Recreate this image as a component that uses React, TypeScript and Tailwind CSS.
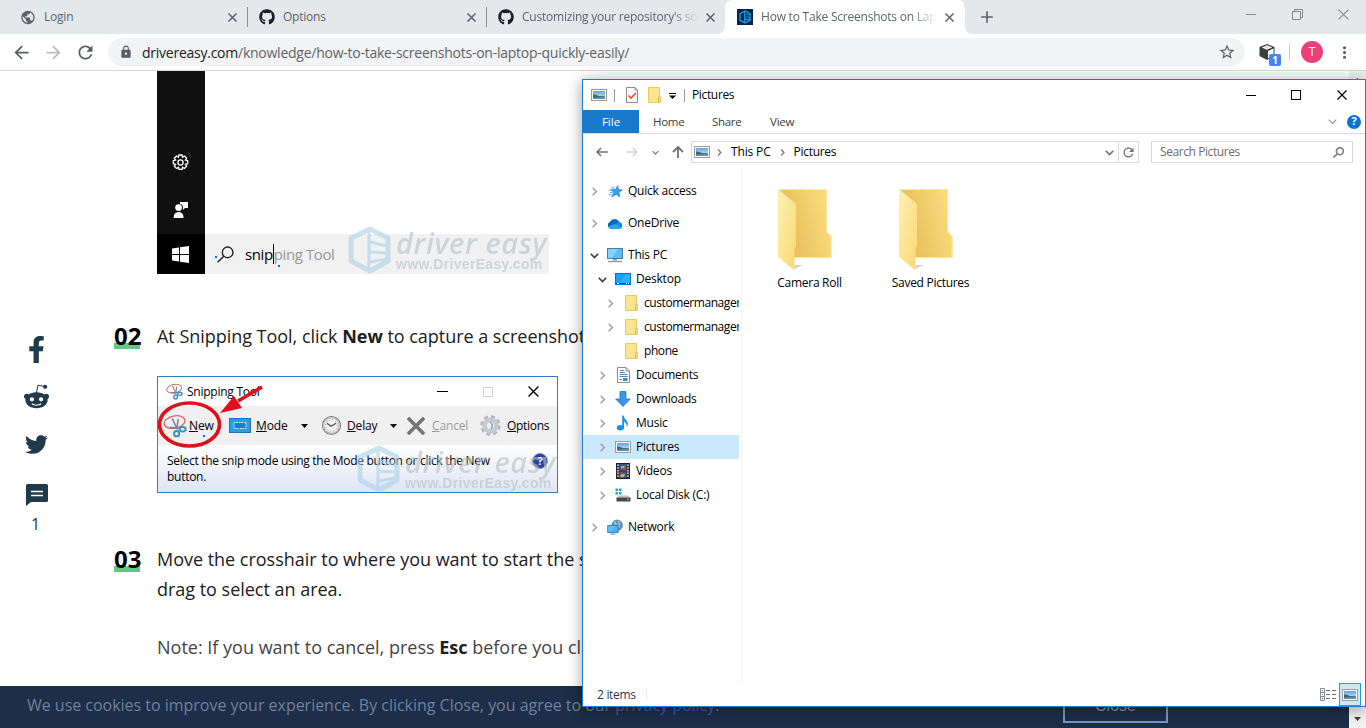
import React from "react";
import {
  MdArrowBack,
  MdArrowForward,
  MdRefresh,
  MdLock,
  MdStarBorder,
  MdMoreVert,
  MdAdd,
  MdPublic,
} from "react-icons/md";
import { FaGithub, FaFacebookF, FaRedditAlien, FaTwitter } from "react-icons/fa";

/* ---------- shared icons ---------- */

function Cross({ size = 9, stroke = 1.6, className = "" }: { size?: number; stroke?: number; className?: string }) {
  return (
    <svg width={size} height={size} viewBox="0 0 10 10" className={className} fill="none" stroke="currentColor" strokeWidth={stroke}>
      <path d="M0.5 0.5 L9.5 9.5 M9.5 0.5 L0.5 9.5" />
    </svg>
  );
}

function PictureIcon() {
  return (
    <svg width="16" height="12" viewBox="0 0 16 12" className="shrink-0">
      <defs>
        <linearGradient id="sky" x1="0" y1="0" x2="0" y2="1">
          <stop offset="0" stopColor="#5f9fe8" />
          <stop offset="1" stopColor="#e4f2fb" />
        </linearGradient>
      </defs>
      <rect x="0.5" y="0.5" width="15" height="11" fill="#fff" stroke="#9a9a9a" />
      <rect x="2" y="2" width="12" height="8" fill="url(#sky)" />
      <path d="M2 5.2 Q6 6 8 7 L14 7.2 V10 H2 Z" fill="#3d6b62" />
      <path d="M2 8.5 L14 7.8 V10 H2 Z" fill="#5a90ad" />
    </svg>
  );
}

function SmallFolder() {
  return (
    <svg width="14" height="16" viewBox="0 0 14 16" className="shrink-0">
      <path d="M0.5 0.5 H11.5 V9.5 H12.5 V15.5 H0.5 Z" fill="#ffe48f" stroke="#ecc85c" />
      <path d="M10.5 15 V10.2 Q10.5 9.5 11.5 9.5" fill="none" stroke="#dcb544" />
    </svg>
  );
}

function BigFolder() {
  return (
    <svg width="64" height="84" viewBox="0 0 64 84">
      <defs>
        <linearGradient id="folderBack" x1="0" y1="0.3" x2="1" y2="0">
          <stop offset="0.2" stopColor="#e9c35f" />
          <stop offset="1" stopColor="#ffe085" />
        </linearGradient>
        <linearGradient id="folderFront" x1="0" y1="0" x2="1" y2="1">
          <stop offset="0" stopColor="#fff0b5" />
          <stop offset="1" stopColor="#fbd871" />
        </linearGradient>
        <linearGradient id="folderShade" x1="0" y1="0" x2="1" y2="0">
          <stop offset="0" stopColor="#cfcfcf" />
          <stop offset="1" stopColor="#ffffff" />
        </linearGradient>
      </defs>
      <path d="M50 70 L63 65 L54 66 Z M17 81 L26 77 L18 77 Z" fill="url(#folderShade)" />
      <path d="M1 1 H50 V44 L54.5 48 V69.5 H14 Z" fill="url(#folderBack)" />
      <path d="M1 1.5 H50" stroke="#ffe9a6" fill="none" />
      <path d="M49.5 1 V44 L54 48.3 V69.5 H18" stroke="#ffe695" fill="none" />
      <path d="M1 1 L19 16 V58 L17.5 61 V82.5 L1 69 Z" fill="url(#folderFront)" />
    </svg>
  );
}

type Dir = "right" | "down";
function Chevron({ dir, size = 9, className = "text-[#a0a0a0]", width = 1.8 }: { dir: Dir; size?: number; className?: string; width?: number }) {
  return (
    <svg width={size} height={size} viewBox="0 0 10 10" className={className} fill="none" stroke="currentColor" strokeWidth={width}>
      {dir === "right" ? <path d="M3 0.8 L7 5 L3 9.2" /> : <path d="M0.8 3 L5 7.2 L9.2 3" />}
    </svg>
  );
}

function Magnifier({ size, className = "", width = 1.6 }: { size: number; className?: string; width?: number }) {
  return (
    <svg width={size} height={size} viewBox="0 0 16 16" className={className} fill="none" stroke="currentColor" strokeWidth={width}>
      <circle cx="10" cy="6" r="5" />
      <path d="M6.4 9.6 L0.6 15.4" />
    </svg>
  );
}

/* ---------- browser chrome ---------- */

function DriverEasyFavicon() {
  return (
    <svg width="16" height="16" viewBox="0 0 16 16" className="shrink-0">
      <rect width="16" height="16" fill="#08224c" />
      <path d="M8 2 L13 4.6 V11.2 L8 14 L3 11.2 V4.6 Z" fill="none" stroke="#1597dc" strokeWidth="1.5" />
      <path d="M7.6 2.5 V13.5 M8 5.8 H12.4 M8 8 H12.4 M8 10.4 H12.4" stroke="#1597dc" strokeWidth="1.1" />
    </svg>
  );
}

function Tab({ icon, title, active, fade }: { icon: React.ReactNode; title: string; active?: boolean; fade?: boolean }) {
  return (
    <div className={"relative flex h-[34px] w-[239px] shrink-0 items-center pl-3 text-[#5f6368] " + (active ? "bg-white" : "")}>
      {active && (
        <svg width="256" height="34" viewBox="0 0 256 34" className="absolute top-0 -left-2">
          <path d="M8 0 H16 Q8 0 8 8 Z" fill="#e4e8eb" />
          <path d="M0 34 Q8 34 8 26 V34 Z" fill="#fff" />
          <path d="M240 0 H248 V8 Q248 0 240 0 Z" fill="#e4e8eb" />
          <path d="M247 8 H248 V26 Q248 34 256 34 H247 Z" fill="#fff" />
        </svg>
      )}
      <span className="relative flex w-4 justify-center">{icon}</span>
      <span
        className={
          "relative ml-2 w-[177px] overflow-hidden whitespace-nowrap text-[12px] tracking-[-0.22px] " +
          (fade ? "[mask-image:linear-gradient(to_right,black_150px,transparent_176px)]" : "")
        }
      >
        {title}
      </span>
      <Cross size={9} stroke={1.7} className="relative ml-[7px] shrink-0" />
      {!active && !title.startsWith("Cust") && <span className="-mr-px ml-auto h-5 w-px bg-[#8a8d91]" />}
    </div>
  );
}

function BrowserChrome() {
  return (
    <header className="relative h-[71px] w-full border-b border-[#d6d8db] bg-white">
      <div className="flex h-[34px] items-center bg-[#e4e8eb] pl-2">
        <Tab icon={<MdPublic size={17} />} title="Login" />
        <Tab icon={<FaGithub size={16} className="text-[#1b1f23]" />} title="Options" />
        <Tab icon={<FaGithub size={16} className="text-[#1b1f23]" />} title="Customizing your repository's soc" fade />
        <Tab icon={<DriverEasyFavicon />} title="How to Take Screenshots on Lapt" active fade />
        <MdAdd size={20} className="ml-[13px] text-[#5f6368]" />
        <div className="mb-1.5 ml-auto flex items-center pr-[17px] text-[#85888b]">
          <span className="mr-[36px] h-px w-[10px] bg-[#85888b]" />
          <svg width="11" height="11" viewBox="0 0 11 11" className="mr-[35px]" fill="none" stroke="currentColor">
            <path d="M0.5 2.5 H8.5 V10.5 H0.5 Z M2.5 2.5 V0.5 H10.5 V8.5 H8.5" />
          </svg>
          <Cross size={11} stroke={1} />
        </div>
      </div>
      <div className="flex h-9 items-center pl-[11px] text-[#5a5e62]">
        <MdArrowBack size={21} />
        <MdArrowForward size={21} className="ml-[11px] text-[#b9bbbd]" />
        <MdRefresh size={21} className="ml-[11px]" />
        <div className="ml-3 flex h-7 w-[1137px] items-center rounded-full bg-[#f1f3f4] pl-[11px] pr-[9px]">
          <MdLock size={14} />
          <span className="ml-[9px] whitespace-nowrap text-[14px] tracking-[-0.25px] text-[#5f6368]">
            <span className="text-[#202124]">drivereasy.com</span>/knowledge/how-to-take-screenshots-on-laptop-quickly-easily/
          </span>
          <MdStarBorder size={18} className="ml-auto" />
        </div>
        <div className="relative ml-[13px] h-[22px] w-[24px]">
          <svg width="18" height="18" viewBox="0 0 18 18" className="mt-[2px]">
            <path d="M9 1 L16.5 4 V13 L9 17 L1.5 13 V4 Z" fill="#3c3f42" />
            <path d="M9 2.2 L14.2 4.4 L9 6.8 L3.8 4.4 Z" fill="#fff" />
            <path d="M9 3 L12 4.4 L9 5.7 L6 4.4 Z" fill="#d8d8d8" />
            <path d="M10 8 L15.5 5.5 V12.4 L10 15.3 Z" fill="#fff" />
          </svg>
          <span className="absolute top-[13px] left-[11px] flex h-3 w-3 items-center justify-center rounded-[2px] bg-[#4285f4] text-[10px] font-bold leading-none text-white">
            1
          </span>
        </div>
        <span className="ml-[7px] h-4 w-px bg-[#c8cacc]" />
        <span className="ml-[11px] flex h-[22px] w-[22px] items-center justify-center rounded-full bg-[#ec407a] text-[12px] text-white">T</span>
        <MdMoreVert size={19} className="ml-[12px]" />
      </div>
    </header>
  );
}

/* ---------- article ---------- */

function Watermark({ className = "" }: { className?: string }) {
  return (
    <div className={"absolute flex items-center opacity-60 " + className}>
      <svg width="44" height="48" viewBox="0 0 44 48" fill="none" stroke="#a9d3e6" strokeWidth="5">
        <path d="M22 3 L40 12 V35 L22 45 L3 35 V12 Z" strokeLinejoin="round" />
        <path d="M21 3 V45 M22 16 L39 20 M22 26 L39 27 M22 36 L38 33" strokeWidth="3.2" />
      </svg>
      <div className="ml-[4px] flex flex-col whitespace-nowrap text-[#b9bfc5]">
        <span className="text-[29px] leading-[27px] font-semibold tracking-[0.55px] italic">driver easy</span>
        <span className="mt-[1px] font-['Liberation_Sans'] text-[14px] leading-[15px] font-bold tracking-[0.32px]">www.DriverEasy.com</span>
      </div>
    </div>
  );
}

function SearchFigure() {
  return (
    <figure className="relative flex h-[203px] w-[392px]">
      <div className="flex w-12 flex-col bg-[#101010] text-white">
        <div className="flex h-[163px] flex-col items-center pt-[83px] pr-px">
          <svg width="17" height="17" viewBox="0 0 24 24" fill="none" stroke="currentColor" strokeWidth="1.9">
            <path d="M9.8 1.4 h4.4 l.7 3.1 2.7-1.7 3.1 3.1-1.7 2.7 3.1.8 v4.4 l-3.1.8 1.7 2.7-3.1 3.1-2.7-1.7-.7 3.1 H9.8 l-.7-3.1-2.7 1.7-3.1-3.1 1.7-2.7-3.1-.8 V9.4 l3.1-.8 L3.3 5.9 l3.1-3.1 2.7 1.7 Z" />
            <circle cx="12" cy="12" r="3.6" />
          </svg>
          <svg width="16" height="17" viewBox="0 0 16 17" fill="currentColor" className="mt-[30px]">
            <circle cx="5.6" cy="6.6" r="3.4" />
            <path d="M0.6 17 Q0.6 11 5.6 11 Q10.6 11 10.6 17 Z M7 1 H15 V7 H12 L10 9 V7 Q10 3 7 3 Z" />
          </svg>
        </div>
        <div className="flex h-10 items-center justify-center bg-black pr-px">
          <svg width="17" height="17" viewBox="0 0 17 17" fill="currentColor">
            <path d="M0 2.4 L7 1.4 V8 H0 Z M8 1.2 L17 0 V8 H8 Z M0 9 H7 V15.6 L0 14.6 Z M8 9 H17 V17 L8 15.8 Z" />
          </svg>
        </div>
      </div>
      <div className="mt-[163px] flex h-10 flex-1 items-center bg-[#f1f1f1] pl-3">
        <Magnifier size={17} width={1.3} className="text-[#202020]" />
        <span className="ml-[11px] flex items-center text-[15px] tracking-[-0.4px] whitespace-nowrap text-black">
          <span>snip</span>
          <span className="h-5 w-px bg-black" />
          <span className="text-[#969696]">ping Tool</span>
        </span>
      </div>
      <span className="absolute top-[185px] left-[58px] h-[2px] w-[2px] bg-blue-600" />
      <span className="absolute top-[194px] left-[121px] h-[2px] w-[2px] bg-blue-600" />
      <Watermark className="top-[155px] left-[191px]" />
    </figure>
  );
}

function SnipIcon({ size }: { size: number }) {
  return (
    <svg width={size} height={size} viewBox="0 0 22 22" fill="none" className="shrink-0">
      <ellipse cx="10.5" cy="7.5" rx="9.7" ry="5.6" stroke="#e0625e" strokeWidth="1.2" transform="rotate(-12 10 7)" />
      <path d="M8.5 4 L13 14 M14 4.5 L12.5 14" stroke="#7b8490" strokeWidth="1.4" />
      <path d="M6 12 L15 13" stroke="#7b8490" strokeWidth="1.3" />
      <circle cx="12.5" cy="18" r="2.4" stroke="#3d8fc8" strokeWidth="1.8" />
      <ellipse cx="18" cy="14" rx="2.8" ry="2" stroke="#3d8fc8" strokeWidth="1.8" />
    </svg>
  );
}

function SnippingFigure() {
  return (
    <figure className="relative flex h-[117px] w-[401px] flex-col border border-[#2b80c8] bg-white text-[12px] text-black">
      <div className="flex h-[29px] items-center pl-[8px]">
        <SnipIcon size={17} />
        <span className="ml-[4px] w-[75px] tracking-[-0.25px] whitespace-nowrap">Snipping Tool</span>
        <span className="ml-[175px] h-px w-[11px] bg-black" />
        <span className="ml-[35px] h-[10px] w-[10px] border border-[#cfcfcf]" />
        <Cross size={11} stroke={1.2} className="ml-[35px]" />
      </div>
      <div className="flex h-[39px] items-center bg-[#f0f0f0] pl-[5px] tracking-[-0.15px] whitespace-nowrap">
        <span className="flex w-[26px]"><SnipIcon size={24} /></span>
        <span className="w-[40px]"><u>N</u>ew</span>
        <span className="flex w-[27px]">
          <svg width="22" height="15" viewBox="0 0 22 15">
            <rect x="0.5" y="0.5" width="21" height="14" fill="#22a0f0" stroke="#1578c0" />
            <rect x="5" y="4.5" width="12" height="6" fill="#1580d0" stroke="#fff" strokeDasharray="1.5 1" />
          </svg>
        </span>
        <span className="w-[45px]"><u>M</u>ode</span>
        <span className="w-[20px]"><svg width="7" height="4" viewBox="0 0 7 4"><path d="M0 0 H7 L3.5 4 Z" /></svg></span>
        <span className="w-[26px]">
          <svg width="21" height="21" viewBox="0 0 21 21" fill="none">
            <circle cx="10.5" cy="10.5" r="9" fill="#f2f2f2" stroke="#7c7c7c" strokeWidth="1.1" />
            <circle cx="10.5" cy="10.5" r="7.8" stroke="#b8b8b8" strokeWidth="1.2" />
            <circle cx="10.5" cy="10.5" r="5.8" stroke="#8c8c8c" strokeDasharray="1 2.04" />
            <path d="M6 8.2 L10 11.3 L15 8.2" stroke="#505050" strokeWidth="1.1" />
          </svg>
        </span>
        <span className="w-[43px]"><u>D</u>elay</span>
        <span className="w-[17px]"><svg width="7" height="4" viewBox="0 0 7 4"><path d="M0 0 H7 L3.5 4 Z" /></svg></span>
        <span className="w-[25px] text-[#757575]"><Cross size={18} stroke={2} /></span>
        <span className="w-[48px] text-[#9b9b9b]"><u>C</u>ancel</span>
        <span className="w-[27px]">
          <svg width="21" height="21" viewBox="0 0 21 21" fill="none">
            <circle cx="10.5" cy="10.5" r="8.8" stroke="#b4babf" strokeWidth="3" strokeDasharray="4.1 2.81" />
            <circle cx="10.5" cy="10.5" r="5.8" fill="#eef1f3" stroke="#c3cad0" strokeWidth="4.5" />
            <path d="M10 7 Q14 10 11 14" stroke="#8fa3b5" strokeWidth="1.5" />
          </svg>
        </span>
        <span className="tracking-[-0.3px]"><u>O</u>ptions</span>
      </div>
      <div className="flex flex-1 justify-between bg-gradient-to-b from-white to-[#dfe4f4] pt-[8px] pr-[9px] pl-[9px]">
        <p className="w-[350px] leading-[16px] tracking-[-0.28px]">Select the snip mode using the Mode button or click the New<br />button.</p>
        <span className="flex h-4 w-4 items-center justify-center rounded-full border border-[#8790b8] bg-[#27449c] text-[11px] font-bold text-white">?</span>
      </div>
      <Watermark className="top-[68px] left-[199px]" />
      <svg width="110" height="75" viewBox="0 0 110 75" fill="none" className="absolute top-0 left-0">
        <ellipse cx="31.5" cy="47.5" rx="30" ry="21.5" stroke="#e0101a" strokeWidth="3.6" />
        <path d="M104 10 L80 24" stroke="#e0101a" strokeWidth="3.6" />
        <path d="M62 36 L76 19 L84 31 Z" fill="#e0101a" />
      </svg>
      <span className="absolute top-[58px] left-[45px] h-[2px] w-[2px] bg-blue-600" />
    </figure>
  );
}

function StepNumber({ value }: { value: string }) {
  return (
    <span className="relative w-[43px] shrink-0 text-[24px] leading-[30px] font-bold text-black">
      <span className="bg-[linear-gradient(#61c888,#61c888)] bg-[length:26px_6px] bg-[position:0_24px] bg-no-repeat">{value}</span>
    </span>
  );
}

function ShareRail() {
  return (
    <aside className="flex w-[72px] shrink-0 flex-col items-center pt-[265px] text-[#1f3a4b]">
      <FaFacebookF size={27} />
      <FaRedditAlien size={27} className="mt-[20px]" />
      <FaTwitter size={23} className="mt-[23px]" />
      <svg width="22" height="22" viewBox="0 0 22 22" className="mt-[28px] ml-[2px]">
        <path d="M1.5 0 H20.5 Q22 0 22 1.5 V16.5 Q22 18 20.5 18 H5 L0 22 V1.5 Q0 0 1.5 0 Z" fill="currentColor" />
        <path d="M5 7.5 H17 M5 11.5 H17" stroke="#fff" strokeWidth="1.3" />
      </svg>
      <span className="mt-[7px] mr-px text-[16px] leading-[22px]">1</span>
    </aside>
  );
}

function Article() {
  return (
    <main className="flex h-[615px] overflow-hidden bg-white">
      <ShareRail />
      <article className="w-[700px] pl-[42px] text-[18px] leading-[30px] text-[#202020]">
        <div className="pl-[43px]"><SearchFigure /></div>
        <div className="mt-[47px] flex whitespace-nowrap">
          <StepNumber value="02" />
          <p className="tracking-[-0.03px]">At Snipping Tool, click <b>New</b> to capture a screenshot.</p>
        </div>
        <div className="mt-[25px] pl-[43px]"><SnippingFigure /></div>
        <div className="mt-[51px] flex whitespace-nowrap">
          <StepNumber value="03" />
          <p className="tracking-[-0.02px]">Move the crosshair to where you want to start the screenshot,<br />drag to select an area.</p>
        </div>
        <p className="mt-[28px] pl-[43px] whitespace-nowrap text-[#444]">Note: If you want to cancel, press <b className="text-[#202020]">Esc</b> before you click</p>
      </article>
      <div className="ml-auto w-[17px] bg-[#f1f1f1] pt-[7px] pl-[5px]">
        <svg width="7" height="4" viewBox="0 0 7 4"><path d="M0 4 H7 L3.5 0 Z" fill="#505050" /></svg>
      </div>
    </main>
  );
}

function CookieBar() {
  return (
    <footer className="flex h-[42px]">
      <div className="flex flex-1 items-start bg-[#1c2e48] pl-[27px]">
        <p className="mt-[7px] text-[16px] leading-[24px] tracking-[-0.02px] whitespace-nowrap text-[#71809a]">
          We use cookies to improve your experience. By clicking Close, you agree to our <span className="text-[#2864b8]">privacy policy</span>.
        </p>
        <span className="mt-[3px] mr-[181px] ml-auto flex h-[34px] w-[105px] items-center justify-center border-2 border-[#7896c2] font-['Liberation_Sans'] text-[16px] text-[#7896c2]">
          Close
        </span>
      </div>
      <div className="flex w-[17px] items-end justify-center bg-[#f1f1f1] pb-[7px]">
        <svg width="7" height="4" viewBox="0 0 7 4"><path d="M0 0 H7 L3.5 4 Z" fill="#404040" /></svg>
      </div>
    </footer>
  );
}

/* ---------- file explorer ---------- */

function StarIcon() {
  return (
    <svg width="15" height="13" viewBox="0 0 16 14">
      <path d="M10.5 0.5 L11 4.8 L15.5 5.3 L11.8 7.8 L12.4 13 L8.7 9.9 L4 12.8 L6 8 L3.6 5 L8 4.8 Z" fill="#35a0ea" stroke="#1b80cc" strokeWidth="0.7" />
      <path d="M3 3.2 H7 M1 5.6 H4 M2 8 H5 M0.5 10.5 H4" stroke="#2a94e0" strokeWidth="0.9" />
    </svg>
  );
}
function CloudIcon() {
  return (
    <svg width="17" height="11" viewBox="0 0 17 11">
      <path d="M4 11 A3.9 3.9 0 0 1 3.2 3.6 A5.5 5.5 0 0 1 13 3.8 A3.7 3.7 0 0 1 13.5 11 Z" fill="#0b68bf" />
      <path d="M4 11 L12 4 A3.7 3.7 0 0 1 13.5 11 Z" fill="#1490df" />
      <path d="M1 9 L8 6 L16 9.8 Q15 11 13.3 11 H4 Q2 11 1 9 Z" fill="#28a8ea" />
    </svg>
  );
}
function PcIcon() {
  return (
    <svg width="16" height="15" viewBox="0 0 16 15">
      <rect x="0.5" y="0.5" width="15" height="10" fill="#55c0fb" stroke="#55788f" />
      <path d="M1 1 H11 L5 10 H1 Z" fill="#86d4fd" />
      <path d="M6 11 H10 V12.5 H6 Z" fill="#8ba0b0" />
      <path d="M1 13.5 H15" stroke="#8fa0b4" strokeWidth="1.5" />
    </svg>
  );
}
function DesktopIcon() {
  return (
    <svg width="16" height="12" viewBox="0 0 16 12">
      <rect x="0.5" y="0.5" width="15" height="11" fill="#1ba1f7" stroke="#0c74c4" />
      <path d="M11 1 L4 10 H15 V1 Z" fill="#35adfa" />
      <path d="M1 10.5 H15" stroke="#07518f" />
      <path d="M2 10.5 H4 M11 10.5 H12 M13 10.5 H14" stroke="#fff" />
    </svg>
  );
}
function DocIcon() {
  return (
    <svg width="13" height="16" viewBox="0 0 13 16" fill="none">
      <path d="M0.5 0.5 H9 L12.5 4 V15.5 H0.5 Z" fill="#fff" stroke="#8c8c8c" />
      <path d="M9 0.5 V4 H12.5" stroke="#8c8c8c" />
      <path d="M2.5 5.5 H8 M2.5 7.5 H10.5 M2.5 9.5 H10.5 M2.5 12.5 H5" stroke="#3f8dcb" />
      <path d="M3 3.5 H7" stroke="#3f8dcb" />
      <rect x="6" y="11" width="4.5" height="3" fill="#3f8f9f" />
    </svg>
  );
}
function DownloadIcon() {
  return (
    <svg width="16" height="16" viewBox="0 0 16 16">
      <path d="M5 0.5 H11 V8 H15.3 L8 15.5 L0.7 8 H5 Z" fill="#3e95e3" stroke="#2377c5" strokeWidth="0.8" />
    </svg>
  );
}
function MusicIcon() {
  return (
    <svg width="14" height="16" viewBox="0 0 14 16">
      <ellipse cx="4.4" cy="12.8" rx="3.6" ry="2.7" fill="#1595e8" />
      <path d="M6.2 13 V0.5 H7.6 Q8 3 10.4 5.5 Q13.2 8.3 10.8 12 Q11 8 8 6.5 V13 Z" fill="#1595e8" />
    </svg>
  );
}
function VideoIcon() {
  return (
    <svg width="14" height="16" viewBox="0 0 14 16">
      <rect x="0.5" y="0.5" width="13" height="15" fill="#333" stroke="#222" />
      <path d="M2 1.5 V15 M12 1.5 V15" stroke="#fff" strokeWidth="1.3" strokeDasharray="1.5 1.2" />
      <rect x="3.5" y="1" width="7" height="6.5" fill="#2d5aa5" />
      <rect x="3.5" y="8.5" width="7" height="6.5" fill="#2d5aa5" />
      <path d="M5 3 H9 L8 5.5 H5 Z M5 11 H9 L8 14 H4 Z" fill="#e0a63a" />
      <path d="M6 5 H10 V7 H6 Z M4 9 H7 V11 Z" fill="#b5443c" />
    </svg>
  );
}
function DiskIcon() {
  return (
    <svg width="16" height="14" viewBox="0 0 16 14">
      <path d="M0.5 0.5 H3 V3 H0.5 Z M4 0.5 H6.5 V3 H4 Z M0.5 4 H3 V6.5 H0.5 Z M4 4 H6.5 V6.5 H4 Z" fill="#17a7df" />
      <path d="M4 7.5 H13 L15.5 9.5 H2 Z" fill="#bfbfbf" />
      <rect x="1.5" y="9.5" width="14" height="4" fill="#474747" />
      <circle cx="13" cy="11.5" r="0.9" fill="#59d267" />
    </svg>
  );
}
function NetworkIcon() {
  return (
    <svg width="17" height="17" viewBox="0 0 17 17">
      <circle cx="10.8" cy="6.2" r="5.6" fill="#5f97ba" stroke="#4c7896" strokeWidth="0.8" />
      <path d="M7.5 2.5 Q10 4 9.4 6 M12.5 1.5 Q13.5 5 12.5 9" stroke="#b4d3e4" fill="none" strokeWidth="1.2" />
      <rect x="0.8" y="6.3" width="11" height="7.5" fill="#43b4f5" stroke="#3384b8" />
      <path d="M1.3 7 H9 L4 13 H1.3 Z" fill="#5cc0f8" />
      <path d="M3.5 15.5 H9" stroke="#8d98a2" strokeWidth="1.3" />
    </svg>
  );
}

type Row = { label: string; icon: React.ReactNode; depth: 0 | 1 | 2; state: "open" | "closed" | "leaf"; gap?: boolean; selected?: boolean };

const rows: Row[] = [
  { label: "Quick access", icon: <StarIcon />, depth: 0, state: "closed" },
  { label: "OneDrive", icon: <CloudIcon />, depth: 0, state: "closed", gap: true },
  { label: "This PC", icon: <PcIcon />, depth: 0, state: "open", gap: true },
  { label: "Desktop", icon: <DesktopIcon />, depth: 1, state: "open" },
  { label: "customermanager", icon: <SmallFolder />, depth: 2, state: "closed" },
  { label: "customermanager", icon: <SmallFolder />, depth: 2, state: "closed" },
  { label: "phone", icon: <SmallFolder />, depth: 2, state: "leaf" },
  { label: "Documents", icon: <DocIcon />, depth: 1, state: "closed" },
  { label: "Downloads", icon: <DownloadIcon />, depth: 1, state: "closed" },
  { label: "Music", icon: <MusicIcon />, depth: 1, state: "closed" },
  { label: "Pictures", icon: <PictureIcon />, depth: 1, state: "closed", selected: true },
  { label: "Videos", icon: <VideoIcon />, depth: 1, state: "closed" },
  { label: "Local Disk (C:)", icon: <DiskIcon />, depth: 1, state: "closed" },
  { label: "Network", icon: <NetworkIcon />, depth: 0, state: "closed", gap: true },
];

const indent = { 0: "pl-[7px]", 1: "pl-[15px]", 2: "pl-[23px]" };

function NavTree() {
  return (
    <nav className="w-[156px] overflow-hidden pt-[9px]">
      {rows.map((r, i) => (
        <div
          key={i}
          className={"flex h-6 items-center whitespace-nowrap " + indent[r.depth] + (r.gap ? " mt-2" : "") + (r.selected ? " bg-[#cce8ff]" : "")}
        >
          <span className="flex w-[9px] shrink-0">
            {r.state !== "leaf" && (
              <Chevron dir={r.state === "open" ? "down" : "right"} className={r.state === "open" ? "text-[#404040]" : "text-[#a0a0a0]"} />
            )}
          </span>
          <span className={"ml-[8px] flex w-4 shrink-0 " + (r.depth === 2 ? "justify-end" : "justify-center")}>{r.icon}</span>
          <span className={"ml-[5px] text-[12px] text-black " + (r.depth === 2 ? "tracking-[-0.42px]" : "tracking-[-0.22px]")}>{r.label}</span>
        </div>
      ))}
    </nav>
  );
}

function Explorer() {
  return (
    <section className="absolute top-[79px] left-[582px] flex h-[628px] w-[784px] flex-col border border-[#1a7fd0] bg-white text-[12px] text-black shadow-[0_2px_14px_rgba(0,0,0,0.38)]">
      <div className="flex h-[30px] items-center pl-2">
        <PictureIcon />
        <span className="ml-[7px] h-[13px] w-px bg-[#9a9a9a]" />
        <svg width="12" height="16" viewBox="0 0 12 16" fill="none" className="ml-[11px]">
          <path d="M0.5 0.5 H9 L11.5 3 V15.5 H0.5 Z" fill="#fafafa" stroke="#8c8c8c" />
          <path d="M9 0.5 V3 H11.5" stroke="#8c8c8c" />
          <path d="M2.5 8.5 L5 11 L10 6" stroke="#e85420" strokeWidth="1.7" />
        </svg>
        <span className="ml-[10px] flex"><SmallFolder /></span>
        <svg width="7" height="6" viewBox="0 0 7 6" className="mt-[2px] ml-[7px]"><path d="M0 0 H7 V1 H0 Z M0 2.5 H7 L3.5 6 Z" /></svg>
        <span className="ml-[8px] h-[13px] w-px bg-[#9a9a9a]" />
        <span className="ml-[7px] tracking-[-0.35px]">Pictures</span>
        <div className="ml-auto flex items-center pr-[18px]">
          <span className="mr-[35px] h-px w-[10px] bg-black" />
          <span className="mr-[36px] h-[10px] w-[10px] border border-black" />
          <Cross size={10} stroke={1.2} />
        </div>
      </div>
      <div className="flex h-[24px] items-center border-b border-[#dadbdc] text-[#3c3c3c]">
        <span className="flex h-[23px] w-14 items-center justify-center bg-[#1979ca] text-[11.5px] text-white">File</span>
        <span className="ml-[14px] w-[59px] text-[11.5px] tracking-[-0.3px]">Home</span>
        <span className="w-[58px] text-[11.5px] tracking-[-0.3px]">Share</span>
        <span className="text-[11.5px] tracking-[-0.2px]">View</span>
        <Chevron dir="down" size={9} width={1.2} className="ml-auto text-[#909090]" />
        <span className="mr-[4px] ml-[10px] flex h-[14px] w-[14px] items-center justify-center rounded-full bg-[#0a74d4] text-[11px] font-bold text-white">?</span>
      </div>
      <div className="flex h-9 items-center pl-[13px] text-[#707070]">
        <svg width="12" height="10" viewBox="0 0 12 10" fill="none" stroke="currentColor" strokeWidth="1.5"><path d="M12 5 H1 M5 1 L1 5 L5 9" /></svg>
        <svg width="12" height="10" viewBox="0 0 12 10" fill="none" stroke="#d4d4d4" strokeWidth="1.4" className="ml-[18px]"><path d="M0 5 H11 M7 1 L11 5 L7 9" /></svg>
        <Chevron dir="down" size={7} className="ml-[14px] text-[#808080]" />
        <svg width="12" height="12" viewBox="0 0 12 12" fill="none" stroke="currentColor" strokeWidth="1.8" className="ml-[13px]"><path d="M6 12 V1 M1 6 L6 1 L11 6" /></svg>
        <div className="ml-[7px] flex h-[22px] w-[448px] items-center border border-[#d9d9d9] pl-[2px] text-black">
          <PictureIcon />
          <Chevron dir="right" size={7} width={2} className="ml-[6px] text-[#808080]" />
          <span className="ml-[8px] tracking-[-0.15px]">This PC</span>
          <Chevron dir="right" size={7} width={2} className="ml-[8px] text-[#808080]" />
          <span className="ml-[8px] tracking-[-0.3px]">Pictures</span>
          <Chevron dir="down" size={9} className="mr-[4px] ml-auto text-[#707070]" />
          <span className="h-full w-px bg-[#d9d9d9]" />
          <MdRefresh size={15} className="mr-[2px] ml-[2px] text-[#707070]" />
        </div>
        <div className="ml-3 flex h-[22px] w-[202px] items-center border border-[#d9d9d9] pr-2 pl-[8px] text-[#6d6d6d]">
          <span className="tracking-[-0.42px]">Search Pictures</span>
          <Magnifier size={11} width={2.4} className="ml-auto text-[#808080]" />
        </div>
      </div>
      <div className="flex h-[513px]">
        <NavTree />
        <div className="ml-[2px] flex flex-1 border-l border-[#f3f3f3] pt-[18px] pl-[6px]">
          {["Camera Roll", "Saved Pictures"].map((name) => (
            <div key={name} className="flex w-[121px] flex-col items-center">
              <BigFolder />
              <span className="mt-[2px] ml-[2px] tracking-[-0.28px]">{name}</span>
            </div>
          ))}
        </div>
      </div>
      <div className="flex flex-1 items-center pl-[14px] text-[#1e395b]">
        <span className="tracking-[-0.3px]">2 items</span>
        <span className="ml-[10px] h-[11px] w-px bg-[#ececec]" />
        <svg width="16" height="13" viewBox="0 0 16 13" fill="none" className="ml-auto">
          <path d="M0.5 0.5 H4.5 V12.5 H0.5 Z M0.5 4.5 H4.5 M0.5 8.5 H4.5" stroke="#8a8a8a" />
          <path d="M2 2.5 H3 M2 6.5 H3" stroke="#4080c0" />
          <path d="M2 10.5 H3" stroke="#c03030" />
          <path d="M6 2.5 H10 M12 2.5 H16 M6 6.5 H10 M12 6.5 H16 M6 10.5 H10 M12 10.5 H16" stroke="#707070" />
        </svg>
        <span className="mr-[4px] ml-[3px] flex h-[23px] w-[22px] items-center justify-center border border-[#2a9ad8] bg-[#cbe8f6]"><PictureIcon /></span>
      </div>
    </section>
  );
}

export default function App() {
  return (
    <div className="relative flex h-[728px] w-[1366px] flex-col overflow-hidden bg-white font-['Open_Sans','Noto_Sans',sans-serif]">
      <BrowserChrome />
      <Article />
      <CookieBar />
      <Explorer />
    </div>
  );
}
